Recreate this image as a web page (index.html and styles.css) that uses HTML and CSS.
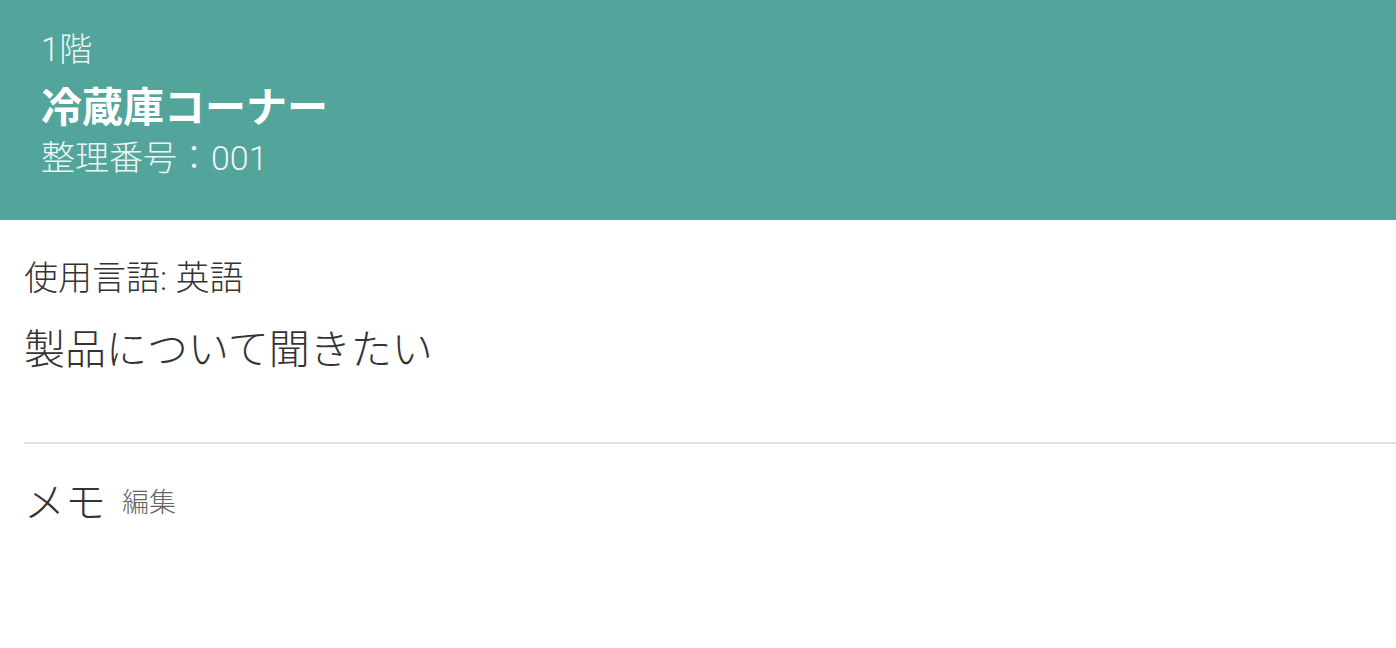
FILE: index.html
```html
<!DOCTYPE html>
<html lang="ja">
<head>
<meta charset="utf-8">
<title>冷蔵庫コーナー</title>
<link rel="stylesheet" href="styles.css">
</head>
<body>
<header class="header">
  <div class="floor">1階</div>
  <div class="title">冷蔵庫コーナー</div>
  <div class="number">整理番号：001</div>
</header>
<main class="content">
  <div class="lang">使用言語: 英語</div>
  <div class="message">製品について聞きたい</div>
  <hr class="divider">
  <div class="memo">
    <span class="memo-label">メモ</span>
    <span class="memo-edit">編集</span>
  </div>
</main>
</body>
</html>
```

FILE: styles.css
```css
html, body {
  margin: 0;
  padding: 0;
  background: #ffffff;
}
body {
  font-family: Roboto, "Noto Sans CJK JP", sans-serif;
  font-weight: 300;
  color: #333333;
}
.header {
  background: #53a59b;
  color: #ffffff;
  height: 220px;
  box-sizing: border-box;
  padding: 28px 0 0 41px;
}
.floor {
  font-size: 33px;
  line-height: 44px;
  color: rgba(255,255,255,0.92);
}
.title {
  margin-top: 6px;
  font-size: 41px;
  line-height: 60px;
  font-weight: 700;
}
.number {
  font-size: 34px;
  line-height: 40px;
  color: rgba(255,255,255,0.92);
}
.content {
  padding: 36px 0 0 24px;
}
.lang {
  font-size: 34px;
  line-height: 44px;
}
.message {
  margin-top: 22px;
  font-size: 41px;
  line-height: 56px;
}
.divider {
  margin: 64px 0 0 0;
  border: 0;
  height: 2px;
  background: #e0e0e0;
}
.memo {
  margin-top: 31px;
  display: flex;
  align-items: center;
  gap: 16px;
  line-height: 56px;
}
.memo-label {
  font-size: 41px;
}
.memo-edit {
  font-size: 27px;
  color: #666666;
}
```
